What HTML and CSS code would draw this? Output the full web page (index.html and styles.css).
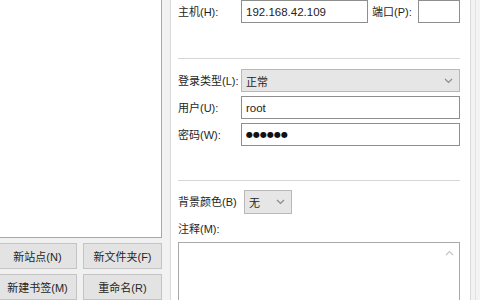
FILE: index.html
```html
<!DOCTYPE html>
<html lang="zh-CN">
<head>
<meta charset="utf-8">
<title>站点管理器</title>
<link rel="stylesheet" href="styles.css">
</head>
<body>
<div class="dlg">
  <div class="left">
    <div class="tree"></div>
    <div class="btns">
      <div class="btn">新站点(N)</div>
      <div class="btn">新文件夹(F)</div>
      <div class="btn">新建书签(M)</div>
      <div class="btn">重命名(R)</div>
    </div>
  </div>
  <div class="splitter"></div>
  <div class="page">
    <div class="host-row">
      <span class="lbl host-lbl">主机(H):</span>
      <div class="field host-in">192.168.42.109</div>
      <span class="lbl port-lbl">端口(P):</span>
      <div class="field port-in"></div>
    </div>
    <div class="sep sep1"></div>
    <div class="form">
      <span class="lbl">登录类型(L):</span>
      <div class="combo"><span>正常</span><svg class="chev" width="9" height="6" viewBox="0 0 9 6"><polyline points="1,1 4.5,4.5 8,1" fill="none" stroke="#8a8a8a" stroke-width="1.2"/></svg></div>
      <span class="lbl">用户(U):</span>
      <div class="field">root</div>
      <span class="lbl">密码(W):</span>
      <div class="field pw">●●●●●●</div>
    </div>
    <div class="sep sep2"></div>
    <div class="bg-row">
      <span class="lbl bg-lbl">背景颜色(B)</span>
      <div class="combo small"><span>无</span><svg class="chev" width="9" height="6" viewBox="0 0 9 6"><polyline points="1,1 4.5,4.5 8,1" fill="none" stroke="#8a8a8a" stroke-width="1.2"/></svg></div>
    </div>
    <div class="lbl notes-lbl">注释(M):</div>
    <div class="textarea">
      <svg class="up" width="9" height="6" viewBox="0 0 9 6"><polyline points="1,5 4.5,1.5 8,5" fill="none" stroke="#c4c4c4" stroke-width="1.2"/></svg>
    </div>
  </div>
  <div class="edge"></div>
</div>
</body>
</html>
```

FILE: styles.css
```css
html, body {
  margin: 0;
  padding: 0;
  width: 480px;
  height: 300px;
  overflow: hidden;
  background: #f0f0f0;
  font-family: "Liberation Sans", "Noto Sans CJK SC", sans-serif;
  font-size: 11px;
  color: #1e1e1e;
}

.dlg {
  display: flex;
  height: 300px;
}

.left {
  margin-left: -2px;
  width: 164px;
  flex: none;
  display: flex;
  flex-direction: column;
}

.tree {
  height: 238px;
  box-sizing: border-box;
  background: #fff;
  border-right: 1px solid #a8a8a8;
  border-bottom: 1px solid #a8a8a8;
}

.btns {
  margin-top: 5px;
  display: grid;
  grid-template-columns: 79px 79px;
  grid-auto-rows: 26px;
  column-gap: 6px;
  row-gap: 5px;
}

.btn {
  box-sizing: border-box;
  background: #e3e3e3;
  border: 1px solid #c4c4c4;
  display: flex;
  align-items: center;
  justify-content: center;
  color: #262626;
}

.splitter {
  width: 8px;
  flex: none;
  background: #f2f2f2;
}

.page {
  width: 301px;
  flex: none;
  box-sizing: border-box;
  background: #fff;
  border-left: 1px solid #d9d9d9;
  border-right: 1px solid #d9d9d9;
  padding: 0 10px 0 7px;
}

.edge {
  flex: 1;
  background: #f3f3f3;
  border-left: 4px solid #f3f3f3;
  box-shadow: inset 1px 0 0 #e2e2e2;
}

.lbl {
  line-height: 16px;
  white-space: nowrap;
}

.host-row {
  display: flex;
  align-items: center;
  height: 23px;
}

.host-lbl {
  width: 63px;
  flex: none;
}

.field {
  box-sizing: border-box;
  height: 23px;
  border: 1px solid #8e8e8e;
  background: #fff;
  padding: 0 4px;
  display: flex;
  align-items: center;
  font-size: 11.5px;
  color: #222;
}

.host-in {
  width: 127px;
  flex: none;
}

.port-lbl {
  margin-left: 4px;
  width: 46px;
  flex: none;
}

.port-in {
  width: 42px;
  flex: none;
}

.sep {
  height: 1px;
  background: #d6d6d6;
}

.sep1 {
  margin-top: 35px;
}

.sep2 {
  margin-top: 34px;
}

.form {
  margin-top: 10px;
  display: grid;
  grid-template-columns: 63px 1fr;
  grid-auto-rows: 23px;
  row-gap: 4px;
  align-items: center;
}

.combo {
  box-sizing: border-box;
  height: 23px;
  border: 1px solid #b9b9b9;
  background: #e6e6e6;
  padding: 0 6px 0 4px;
  display: flex;
  align-items: center;
  justify-content: space-between;
}

.pw {
  font-family: "DejaVu Sans", sans-serif;
  font-size: 8px;
  letter-spacing: 0;
  color: #111;
}

.bg-row {
  margin-top: 9px;
  display: flex;
  align-items: center;
  height: 24px;
}

.bg-lbl {
  width: 66px;
  flex: none;
}

.combo.small {
  width: 48px;
  height: 24px;
  padding: 0 6px 0 4px;
}

.notes-lbl {
  margin-top: 7px;
}

.textarea {
  margin-top: 5px;
  height: 70px;
  box-sizing: border-box;
  border: 1px solid #a9a9a9;
  background: #fff;
  display: flex;
  justify-content: flex-end;
  align-items: flex-start;
  padding: 7px 5px 0 0;
}
```
